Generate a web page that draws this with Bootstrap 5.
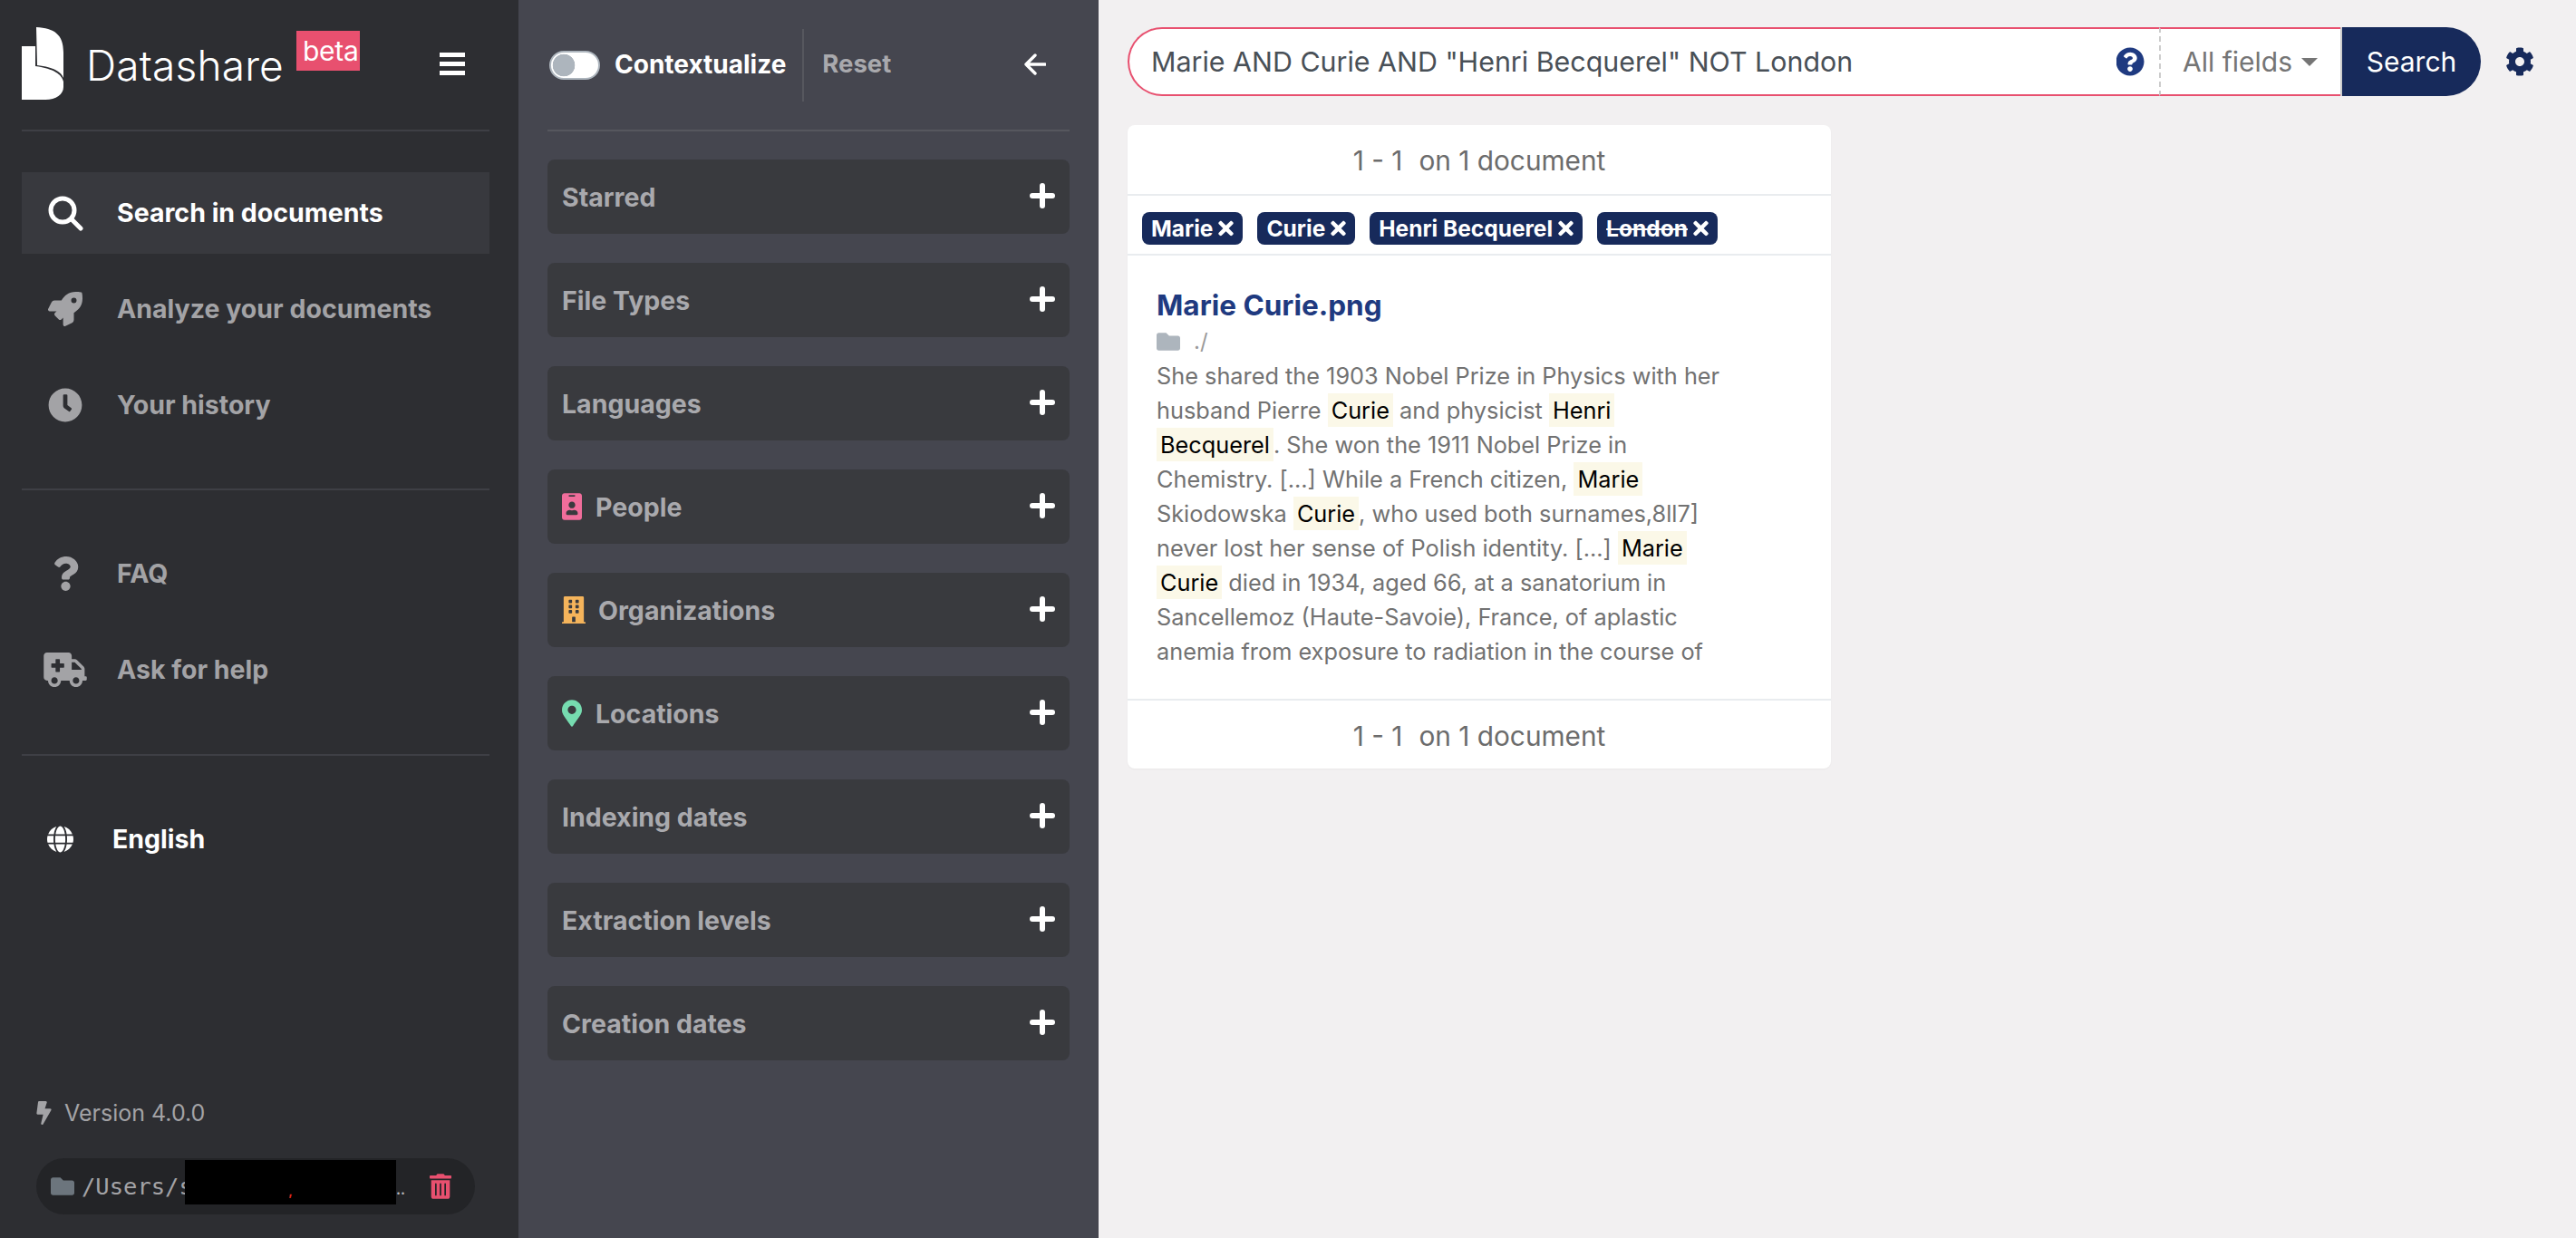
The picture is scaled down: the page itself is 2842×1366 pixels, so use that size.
<!DOCTYPE html>
<html lang="en">
<head>
<meta charset="utf-8">
<title>Datashare</title>
<link href="https://cdn.jsdelivr.net/npm/bootstrap@5.3.0/dist/css/bootstrap.min.css" rel="stylesheet">
<style>
html,body{height:100%;overflow:hidden}
body{font-family:Inter,"Liberation Sans",sans-serif;background:#f2f0f1;color:#6c6c6c}
svg{fill:currentColor;display:block;flex:none}
.defs{position:absolute;width:0;height:0}
.shell{height:1366px}
.side{width:572px;background:#2d2e32;padding:0 32px 26px 24px;color:#a3a3a6}
.brand{height:145px;border-bottom:2px solid #3e3f45;padding-top:30px;align-items:flex-start;flex:none}
.logo{width:46px;height:80px;color:#fff}
.brandname{font-size:46px;font-weight:300;color:#fff;line-height:1;margin:19px 0 0 25px;letter-spacing:.2px}
.beta{background:#e8506f;color:#fff;font-size:30px;line-height:44px;height:44px;padding:0 7px;margin:4px 0 0 14px;width:70px;text-align:center;letter-spacing:-.3px}
.burger{color:#fff;margin:27px 0 0 88px}
.navgrp{padding:47px 0;border-bottom:2px solid #3e3f45;gap:16px;flex:none}
.navgrp.first{padding-top:45px}
.navgrp.mid{padding-bottom:48px}
.navgrp.last{border-bottom:0}
.navrow{height:90px;padding-left:24px;font-size:28.5px;font-weight:700;color:#a3a3a6;text-decoration:none}
.navrow.on{background:#38393e;color:#fff}
.navrow.lang{color:#fff;padding-left:28px}
.icobox{width:48px;margin-right:33px;justify-content:center}
.lang .icobox{width:28px;margin-right:44px}
.ver{font-size:25px;margin:0 0 30px 16px;line-height:40px}
.ver svg{margin-right:14px}
.pathpill{margin-left:16px;width:484px;height:62px;border-radius:31px;background:#232427;padding:0 26px 0 16px;position:relative}
.pathtxt{font-family:"DejaVu Sans Mono","Liberation Mono",monospace;font-size:25.5px;color:#a3a3a6;margin-left:8px;width:354px;white-space:nowrap;overflow:hidden}
.redact{position:absolute;left:164px;top:2px;width:233px;height:49px;background:#000;color:#d9281e;font-size:14px;font-weight:700;line-height:1;text-align:center;padding-top:27px}
.dots{position:absolute;left:397px;top:27px;color:#b5b5b8;font-size:15px;line-height:1;font-weight:700}
.trash{color:#e8506f;margin-left:auto}
.panel{width:640px;background:#45464f;padding:0 32px;color:#a9a9ad}
.phead{height:145px;border-bottom:2px solid #56575e;flex:none}
.tog.form-check-input{width:56px;height:32px;margin:0 16px 0 2px;background-color:#fff;border:2px solid #adb5bd;border-radius:16px;background-image:radial-gradient(circle at 14px 50%,#adb5bd 12px,transparent 12.6px);background-size:auto;box-shadow:none;float:none}
.ctx{font-size:28px;font-weight:700;color:#fff;padding-right:18px;height:80px;border-right:2px solid #56575e;line-height:78px}
.rst{font-size:27.5px;font-weight:700;padding-left:20px;color:#a9a9ad;margin-top:-2px}
.back{color:#fff;margin-left:auto;margin-right:26px;margin-top:-2px}
.filters{margin-top:31px;gap:32px}
.fcard{height:82px;background:#393a3e;border-radius:8px;padding:0 16px;font-size:28.5px;font-weight:700;color:#a9a9ad}
.fcard .flabel{padding-top:2px}
.fcard .plus{margin-left:auto;color:#fff;margin-top:-2px}
.fcard .fic{margin-right:15px}
.fcard .fic.org{margin-right:14px}
.main{padding:30px 0 0 32px;flex:1;min-width:0}
.srow{width:1552px}
.sgrp{width:1494px;height:76px}
.sgrp .form-control{height:76px;border:2px solid #e8506f;border-right:0;border-radius:38px 0 0 38px;font-size:30.4px;color:#495057;padding:0 0 0 24px;box-shadow:none;font-family:inherit}
.helpbox{background:#fff;border:2px solid #e8506f;border-width:2px 0;padding:0 17px 0 0;height:76px;border-radius:0}
.helpbox svg{color:#1f3a80}
.fieldbtn.btn{background:#fff;border:2px solid #e8506f;border-width:2px 0;border-left:2px dashed #ccc;border-radius:0;height:76px;width:200px;font-size:30px;color:#757575;padding:0 0 0 24px;white-space:nowrap;text-align:left}
.fieldbtn.dropdown-toggle::after{margin-left:10px;vertical-align:6px;border-top:.3em solid;border-right:.3em solid transparent;border-left:.3em solid transparent;color:#757575}
.gobtn.btn{background:#172a5b;color:#fff;border:0;border-left:2px solid #ccc;font-size:30px;height:76px;width:155px;padding:0;border-radius:0 38px 38px 0!important;margin-left:0!important}
.gear{color:#172a5b;margin:0 0 0 27px}
.rcard{width:776px;margin-top:32px;background:#fff;border-radius:8px;box-shadow:0 1px 2px rgba(0,0,0,.04)}
.count{height:76px;font-size:29.8px;color:#6c6c6c;justify-content:center;align-items:center;padding-top:3px}
.count .rng{margin-right:18px}
.tags{height:68px;border-top:2px solid #e9ecef;border-bottom:2px solid #e9ecef;padding:8px 16px 0;gap:16px}
.tagpill{background:#172a5b;color:#fff;font-size:24.5px;font-weight:700;height:36px;border-radius:8px;padding:0 10px;line-height:36px;gap:6px}
.tagpill svg{color:#fff}
.rbody{padding:36px 32px 0;height:489px}
.rtitle{font-size:31.5px;font-weight:700;color:#1f3a80;line-height:38px;text-decoration:none;display:block}
.rpath{color:#adb5bd;height:40px;margin-top:1px;font-size:24px;gap:15px}
.rpath span{color:#9a9a9a}
.snip{font-size:25.3px;line-height:38px;color:#727272;width:636px;margin:-1px 0 0}
.hl{background:#fbf8e8;color:#000;padding:3px 4px}
.rfoot{height:77px;border-top:2px solid #e9ecef}
</style>
</head>
<body>
<svg class="defs" aria-hidden="true">
  <symbol id="i-plus" viewBox="0 0 28 28"><rect x="11" width="6" height="28" rx="3"/><rect y="11" width="28" height="6" rx="3"/></symbol>
  <symbol id="i-x" viewBox="0 0 352 512"><path d="M242.72 256l100.07-100.07c12.28-12.28 12.28-32.19 0-44.48l-22.24-22.24c-12.28-12.28-32.19-12.28-44.48 0L176 189.28 75.93 89.21c-12.28-12.28-32.19-12.28-44.48 0L9.21 111.45c-12.28 12.28-12.28 32.19 0 44.48L109.28 256 9.21 356.07c-12.28 12.28-12.28 32.19 0 44.48l22.24 22.24c12.28 12.28 32.2 12.28 44.48 0L176 322.72l100.07 100.07c12.28 12.28 32.2 12.28 44.48 0l22.24-22.24c12.28-12.28 12.28-32.19 0-44.48L242.72 256z"/></symbol>
  <symbol id="i-folder" viewBox="0 0 512 512"><path d="M464 128H272l-64-64H48C21.49 64 0 85.49 0 112v288c0 26.51 21.49 48 48 48h416c26.51 0 48-21.49 48-48V176c0-26.51-21.49-48-48-48z"/></symbol>
</svg>
<div class="shell d-flex">
  <aside class="side d-flex flex-column">
    <div class="brand d-flex">
      <svg class="logo" viewBox="0 0 46 80"><path d="M16 0C36 1 46 8 46 28V56C44 50 36 44 17 42Z"/><path d="M0 21H15V43C36 46 44 52 46 60V66C46 74 38 80 26 80H0Z"/></svg>
      <span class="brandname">Datashare</span>
      <span class="beta">beta</span>
      <svg class="burger" width="28" height="26" viewBox="0 0 28 26"><rect width="28" height="5" y="1"/><rect width="28" height="5" y="11"/><rect width="28" height="5" y="21"/></svg>
    </div>
    <div class="navgrp first d-flex flex-column">
      <a class="navrow on d-flex align-items-center" href="#"><span class="icobox d-flex"><svg width="39" height="39" viewBox="0 0 39 39" style="fill:none;stroke:#fff;stroke-width:5;stroke-linecap:round"><circle cx="16" cy="16" r="13"/><path d="M26 26l10 10"/></svg></span><span>Search in documents</span></a>
      <a class="navrow d-flex align-items-center" href="#"><span class="icobox d-flex"><svg width="38" height="38" viewBox="0 0 512 512"><path d="M505.05 19.1a15.89 15.89 0 0 0-12.2-12.2C460.65 0 435.46 0 410.36 0c-103.2 0-165.1 55.2-211.29 128H94.87A48 48 0 0 0 52 154.49l-49.42 98.8A24 24 0 0 0 24.07 288h103.77l-22.47 22.47a32 32 0 0 0 0 45.25l50.9 50.91a32 32 0 0 0 45.26 0L224 384.16V488a24 24 0 0 0 34.7 21.49l98.7-49.39a47.91 47.91 0 0 0 26.5-42.9V312.79c72.59-46.3 128-108.4 128-211.09.1-25.2.1-50.4-6.85-82.6zM384 168a40 40 0 1 1 40-40 40 40 0 0 1-40 40z"/></svg></span><span>Analyze your documents</span></a>
      <a class="navrow d-flex align-items-center" href="#"><span class="icobox d-flex"><svg width="38" height="38" viewBox="0 0 512 512"><path d="M256,8C119,8,8,119,8,256S119,504,256,504,504,393,504,256,393,8,256,8Zm92.49,313h0l-20,25a16,16,0,0,1-22.49,2.5h0l-67-49.72a40,40,0,0,1-15-31.23V112a16,16,0,0,1,16-16h32a16,16,0,0,1,16,16V256l58,42.5A16,16,0,0,1,348.49,321Z"/></svg></span><span>Your history</span></a>
    </div>
    <div class="navgrp mid d-flex flex-column">
      <a class="navrow d-flex align-items-center" href="#"><span class="icobox d-flex"><svg width="29" height="38" viewBox="0 0 384 512"><path d="M202.021 0C122.202 0 70.503 32.703 29.914 91.026c-7.363 10.58-5.093 25.086 5.178 32.874l43.138 32.709c10.373 7.865 25.132 6.026 33.253-4.148 25.049-31.381 43.63-49.449 82.757-49.449 30.764 0 68.816 19.799 68.816 49.631 0 22.552-18.617 34.134-48.993 51.164-35.423 19.86-82.299 44.576-82.299 106.405V320c0 13.255 10.745 24 24 24h72.471c13.255 0 24-10.745 24-24v-5.773c0-42.86 125.268-44.645 125.268-160.627C377.504 66.256 286.902 0 202.021 0zM192 373.459c-38.196 0-69.271 31.075-69.271 69.271 0 38.195 31.075 69.27 69.271 69.27s69.271-31.075 69.271-69.271-31.075-69.27-69.271-69.27z"/></svg></span><span>FAQ</span></a>
      <a class="navrow d-flex align-items-center" href="#"><span class="icobox d-flex"><svg width="48" height="38" viewBox="0 0 640 512"><path d="M624 352h-16V243.9c0-12.7-5.1-24.9-14.1-33.9L494 110.1c-9-9-21.2-14.1-33.9-14.1H416V48c0-26.5-21.5-48-48-48H48C21.5 0 0 21.5 0 48v320c0 26.5 21.5 48 48 48h16c0 53 43 96 96 96s96-43 96-96h128c0 53 43 96 96 96s96-43 96-96h48c8.8 0 16-7.2 16-16v-32c0-8.8-7.2-16-16-16zM160 464c-26.5 0-48-21.5-48-48s21.5-48 48-48 48 21.5 48 48-21.5 48-48 48zm144-248c0 4.4-3.6 8-8 8h-56v56c0 4.4-3.6 8-8 8h-48c-4.4 0-8-3.6-8-8v-56h-56c-4.4 0-8-3.6-8-8v-48c0-4.4 3.6-8 8-8h56v-56c0-4.4 3.6-8 8-8h48c4.4 0 8 3.6 8 8v56h56c4.4 0 8 3.6 8 8v48zm176 248c-26.5 0-48-21.5-48-48s21.5-48 48-48 48 21.5 48 48-21.5 48-48 48zm80-208H416V144h44.1l99.9 99.9V256z"/></svg></span><span>Ask for help</span></a>
    </div>
    <div class="navgrp last d-flex flex-column">
      <a class="navrow lang d-flex align-items-center" href="#"><span class="icobox d-flex"><svg width="29" height="30" viewBox="0 0 496 512"><path d="M336.5 160C322 70.7 287.8 8 248 8s-74 62.7-88.5 152h177zM152 256c0 22.2 1.2 43.5 3.3 64h185.3c2.1-20.5 3.3-41.8 3.3-64s-1.2-43.5-3.3-64H155.3c-2.1 20.5-3.3 41.8-3.3 64zm324.7-96c-28.6-67.9-86.5-120.4-158-141.6 24.4 33.8 41.2 84.7 50 141.6h108zM177.2 18.4C105.8 39.6 47.8 92.1 19.3 160h108c8.7-56.9 25.5-107.8 49.9-141.6zM487.4 192H372.7c2.1 21 3.3 42.5 3.3 64s-1.2 43-3.3 64h114.6c5.5-20.5 8.6-41.8 8.6-64s-3.1-43.5-8.5-64zM120 256c0-21.5 1.2-43 3.3-64H8.6C3.2 212.5 0 233.8 0 256s3.2 43.5 8.6 64h114.6c-2-21-3.2-42.5-3.2-64zm39.5 96c14.5 89.3 48.7 152 88.5 152s74-62.7 88.5-152h-177zm159.3 141.6c71.4-21.2 129.4-73.7 158-141.6h-108c-8.8 56.9-25.6 107.8-50 141.6zM19.3 352c28.6 67.9 86.5 120.4 158 141.6-24.4-33.8-41.2-84.7-50-141.6h-108z"/></svg></span><span>English</span></a>
    </div>
    <div class="mt-auto">
      <div class="ver d-flex align-items-center"><svg width="17" height="26" viewBox="0 0 320 512"><path d="M296 160H180.6l42.6-129.8C227.2 15 215.7 0 200 0H56C44 0 33.8 8.9 32.2 20.8l-32 240C-1.7 275.2 9.5 288 24 288h118.7L96.6 482.5c-3.6 15.2 8 29.5 23.3 29.5 8.4 0 16.4-4.4 20.8-12l176-304c9.3-15.9-2.2-36-20.7-36z"/></svg><span>Version 4.0.0</span></div>
      <div class="pathpill d-flex align-items-center">
        <svg class="text-secondary" width="26" height="26"><use href="#i-folder"/></svg>
        <span class="pathtxt">/Users/s</span>
        <span class="redact">,</span><span class="dots">..</span>
        <svg class="trash" width="24" height="28" viewBox="0 0 448 512"><path d="M32 464a48 48 0 0 0 48 48h288a48 48 0 0 0 48-48V128H32zm272-256a16 16 0 0 1 32 0v224a16 16 0 0 1-32 0zm-96 0a16 16 0 0 1 32 0v224a16 16 0 0 1-32 0zm-96 0a16 16 0 0 1 32 0v224a16 16 0 0 1-32 0zM432 32H312l-9.4-18.7A24 24 0 0 0 281.1 0H166.8a23.72 23.72 0 0 0-21.4 13.3L136 32H16A16 16 0 0 0 0 48v32a16 16 0 0 0 16 16h416a16 16 0 0 0 16-16V48a16 16 0 0 0-16-16z"/></svg>
      </div>
    </div>
  </aside>
  <section class="panel d-flex flex-column">
    <div class="phead d-flex align-items-center">
      <input class="tog form-check-input" type="checkbox" role="switch" aria-label="Contextualize">
      <span class="ctx">Contextualize</span>
      <span class="rst">Reset</span>
      <svg class="back" width="24" height="24" viewBox="0 0 24 24" style="fill:none;stroke:#fff;stroke-width:3.4;stroke-linecap:round;stroke-linejoin:round"><path d="M12 2L2 12l10 10M2 12h21"/></svg>
    </div>
    <div class="filters d-flex flex-column">
      <div class="fcard d-flex align-items-center"><span class="flabel">Starred</span><svg class="plus" width="28" height="28"><use href="#i-plus"/></svg></div>
      <div class="fcard d-flex align-items-center"><span class="flabel">File Types</span><svg class="plus" width="28" height="28"><use href="#i-plus"/></svg></div>
      <div class="fcard d-flex align-items-center"><span class="flabel">Languages</span><svg class="plus" width="28" height="28"><use href="#i-plus"/></svg></div>
      <div class="fcard d-flex align-items-center"><svg class="fic" width="22" height="30" viewBox="0 0 384 512" style="color:#f06d9b"><path d="M336 0H48C21.5 0 0 21.5 0 48v416c0 26.5 21.5 48 48 48h288c26.5 0 48-21.5 48-48V48c0-26.5-21.5-48-48-48zM144 32h96c8.8 0 16 7.2 16 16s-7.2 16-16 16h-96c-8.8 0-16-7.2-16-16s7.2-16 16-16zm48 128c35.3 0 64 28.7 64 64s-28.7 64-64 64-64-28.7-64-64 28.7-64 64-64zm112 236.8c0 10.6-10 19.2-22.4 19.2H102.4C90 416 80 407.4 80 396.8v-19.2c0-31.8 30.1-57.6 67.2-57.6h5c12.3 5.1 25.7 8 39.8 8s27.6-2.9 39.8-8h5c37.1 0 67.2 25.8 67.2 57.6v19.2z"/></svg><span class="flabel">People</span><svg class="plus" width="28" height="28"><use href="#i-plus"/></svg></div>
      <div class="fcard d-flex align-items-center"><svg class="fic org" width="26" height="30" viewBox="0 0 448 512" preserveAspectRatio="none" style="color:#f5b45b"><path d="M436 480h-20V24c0-13.255-10.745-24-24-24H56C42.745 0 32 10.745 32 24v456H12c-6.627 0-12 5.373-12 12v20h448v-20c0-6.627-5.373-12-12-12zM128 76c0-6.627 5.373-12 12-12h40c6.627 0 12 5.373 12 12v40c0 6.627-5.373 12-12 12h-40c-6.627 0-12-5.373-12-12V76zm0 96c0-6.627 5.373-12 12-12h40c6.627 0 12 5.373 12 12v40c0 6.627-5.373 12-12 12h-40c-6.627 0-12-5.373-12-12v-40zm52 148h-40c-6.627 0-12-5.373-12-12v-40c0-6.627 5.373-12 12-12h40c6.627 0 12 5.373 12 12v40c0 6.627-5.373 12-12 12zm76 160h-64v-84c0-6.627 5.373-12 12-12h40c6.627 0 12 5.373 12 12v84zm64-172c0 6.627-5.373 12-12 12h-40c-6.627 0-12-5.373-12-12v-40c0-6.627 5.373-12 12-12h40c6.627 0 12 5.373 12 12v40zm0-96c0 6.627-5.373 12-12 12h-40c-6.627 0-12-5.373-12-12v-40c0-6.627 5.373-12 12-12h40c6.627 0 12 5.373 12 12v40zm0-96c0 6.627-5.373 12-12 12h-40c-6.627 0-12-5.373-12-12V76c0-6.627 5.373-12 12-12h40c6.627 0 12 5.373 12 12v40z"/></svg><span class="flabel">Organizations</span><svg class="plus" width="28" height="28"><use href="#i-plus"/></svg></div>
      <div class="fcard d-flex align-items-center"><svg class="fic" width="22" height="30" viewBox="0 0 384 512" style="color:#76dcb0"><path d="M172.268 501.67C26.97 291.031 0 268.413 0 192 0 85.961 85.961 0 192 0s192 85.961 192 192c0 76.413-26.97 99.031-172.268 309.67-9.535 13.774-29.93 13.773-39.464 0zM192 272c44.183 0 80-35.817 80-80s-35.817-80-80-80-80 35.817-80 80 35.817 80 80 80z"/></svg><span class="flabel">Locations</span><svg class="plus" width="28" height="28"><use href="#i-plus"/></svg></div>
      <div class="fcard d-flex align-items-center"><span class="flabel">Indexing dates</span><svg class="plus" width="28" height="28"><use href="#i-plus"/></svg></div>
      <div class="fcard d-flex align-items-center"><span class="flabel">Extraction levels</span><svg class="plus" width="28" height="28"><use href="#i-plus"/></svg></div>
      <div class="fcard d-flex align-items-center"><span class="flabel">Creation dates</span><svg class="plus" width="28" height="28"><use href="#i-plus"/></svg></div>
    </div>
  </section>
  <main class="main">
    <div class="srow d-flex align-items-center">
      <div class="sgrp input-group flex-nowrap">
        <input class="form-control" type="text" value="Marie AND Curie AND &quot;Henri Becquerel&quot; NOT London" aria-label="Search">
        <span class="helpbox d-flex align-items-center"><svg width="32" height="32" viewBox="0 0 512 512"><path d="M504 256c0 136.997-111.043 248-248 248S8 392.997 8 256C8 119.083 119.043 8 256 8s248 111.083 248 248zM262.655 90c-54.497 0-89.255 22.957-116.549 63.758-3.536 5.286-2.353 12.415 2.715 16.258l34.699 26.31c5.205 3.947 12.621 3.008 16.665-2.122 17.864-22.658 30.113-35.797 57.303-35.797 20.429 0 45.698 13.148 45.698 32.958 0 14.976-12.363 22.667-32.534 33.976C247.128 238.528 216 254.941 216 296v4c0 6.627 5.373 12 12 12h56c6.627 0 12-5.373 12-12v-1.333c0-28.462 83.186-29.647 83.186-106.667 0-58.002-60.165-102-116.531-102zM256 338c-25.365 0-46 20.635-46 46 0 25.364 20.635 46 46 46s46-20.636 46-46c0-25.365-20.635-46-46-46z"/></svg></span>
        <button class="fieldbtn btn dropdown-toggle" type="button">All fields</button>
        <button class="gobtn btn" type="button">Search</button>
      </div>
      <svg class="gear" width="32" height="32" viewBox="0 0 512 512"><path d="M487.4 315.7l-42.6-24.6c4.3-23.2 4.3-47 0-70.2l42.6-24.6c4.9-2.8 7.1-8.6 5.5-14-11.1-35.6-30-67.8-54.7-94.6-3.8-4.1-10-5.1-14.8-2.3L380.8 110c-17.9-15.4-38.5-27.3-60.8-35.1V25.8c0-5.6-3.9-10.5-9.4-11.7-36.7-8.2-74.3-7.8-109.2 0-5.5 1.2-9.4 6.1-9.4 11.7V75c-22.2 7.9-42.8 19.8-60.8 35.1L88.7 85.5c-4.9-2.8-11-1.9-14.8 2.3-24.7 26.7-43.6 58.9-54.7 94.6-1.7 5.4.6 11.2 5.5 14L67.3 221c-4.3 23.2-4.3 47 0 70.2l-42.6 24.6c-4.9 2.8-7.1 8.6-5.5 14 11.1 35.6 30 67.8 54.7 94.6 3.8 4.1 10 5.1 14.8 2.3l42.6-24.6c17.9 15.4 38.5 27.3 60.8 35.1v49.2c0 5.6 3.9 10.5 9.4 11.7 36.7 8.2 74.3 7.8 109.2 0 5.5-1.2 9.4-6.1 9.4-11.7v-49.2c22.2-7.9 42.8-19.8 60.8-35.1l42.6 24.6c4.9 2.8 11 1.9 14.8-2.3 24.7-26.7 43.6-58.9 54.7-94.6 1.5-5.5-.7-11.3-5.6-14.1zM256 336c-44.1 0-80-35.9-80-80s35.9-80 80-80 80 35.9 80 80-35.9 80-80 80z"/></svg>
    </div>
    <div class="rcard">
      <div class="count d-flex"><span class="rng">1 - 1</span><span>on 1 document</span></div>
      <div class="tags d-flex align-items-center">
        <span class="tagpill d-flex align-items-center"><span>Marie</span><svg width="17" height="24"><use href="#i-x"/></svg></span>
        <span class="tagpill d-flex align-items-center"><span>Curie</span><svg width="17" height="24"><use href="#i-x"/></svg></span>
        <span class="tagpill d-flex align-items-center"><span>Henri Becquerel</span><svg width="17" height="24"><use href="#i-x"/></svg></span>
        <span class="tagpill d-flex align-items-center"><s>London</s><svg width="17" height="24"><use href="#i-x"/></svg></span>
      </div>
      <div class="rbody">
        <a class="rtitle" href="#">Marie Curie.png</a>
        <div class="rpath d-flex align-items-center"><svg width="26" height="26"><use href="#i-folder"/></svg><span>./</span></div>
        <p class="snip">She shared the 1903 Nobel Prize in Physics with her husband Pierre <mark class="hl">Curie</mark> and physicist <mark class="hl">Henri</mark> <mark class="hl">Becquerel</mark>. She won the 1911 Nobel Prize in Chemistry. [...] While a French citizen, <mark class="hl">Marie</mark> Skiodowska <mark class="hl">Curie</mark>, who used both surnames,8ll7] never lost her sense of Polish identity. [...] <mark class="hl">Marie</mark> <mark class="hl">Curie</mark> died in 1934, aged 66, at a sanatorium in Sancellemoz (Haute-Savoie), France, of aplastic anemia from exposure to radiation in the course of</p>
      </div>
      <div class="count rfoot d-flex"><span class="rng">1 - 1</span><span>on 1 document</span></div>
    </div>
  </main>
</div>
<script src="https://cdn.jsdelivr.net/npm/bootstrap@5.3.0/dist/js/bootstrap.bundle.min.js"></script>
</body>
</html>
